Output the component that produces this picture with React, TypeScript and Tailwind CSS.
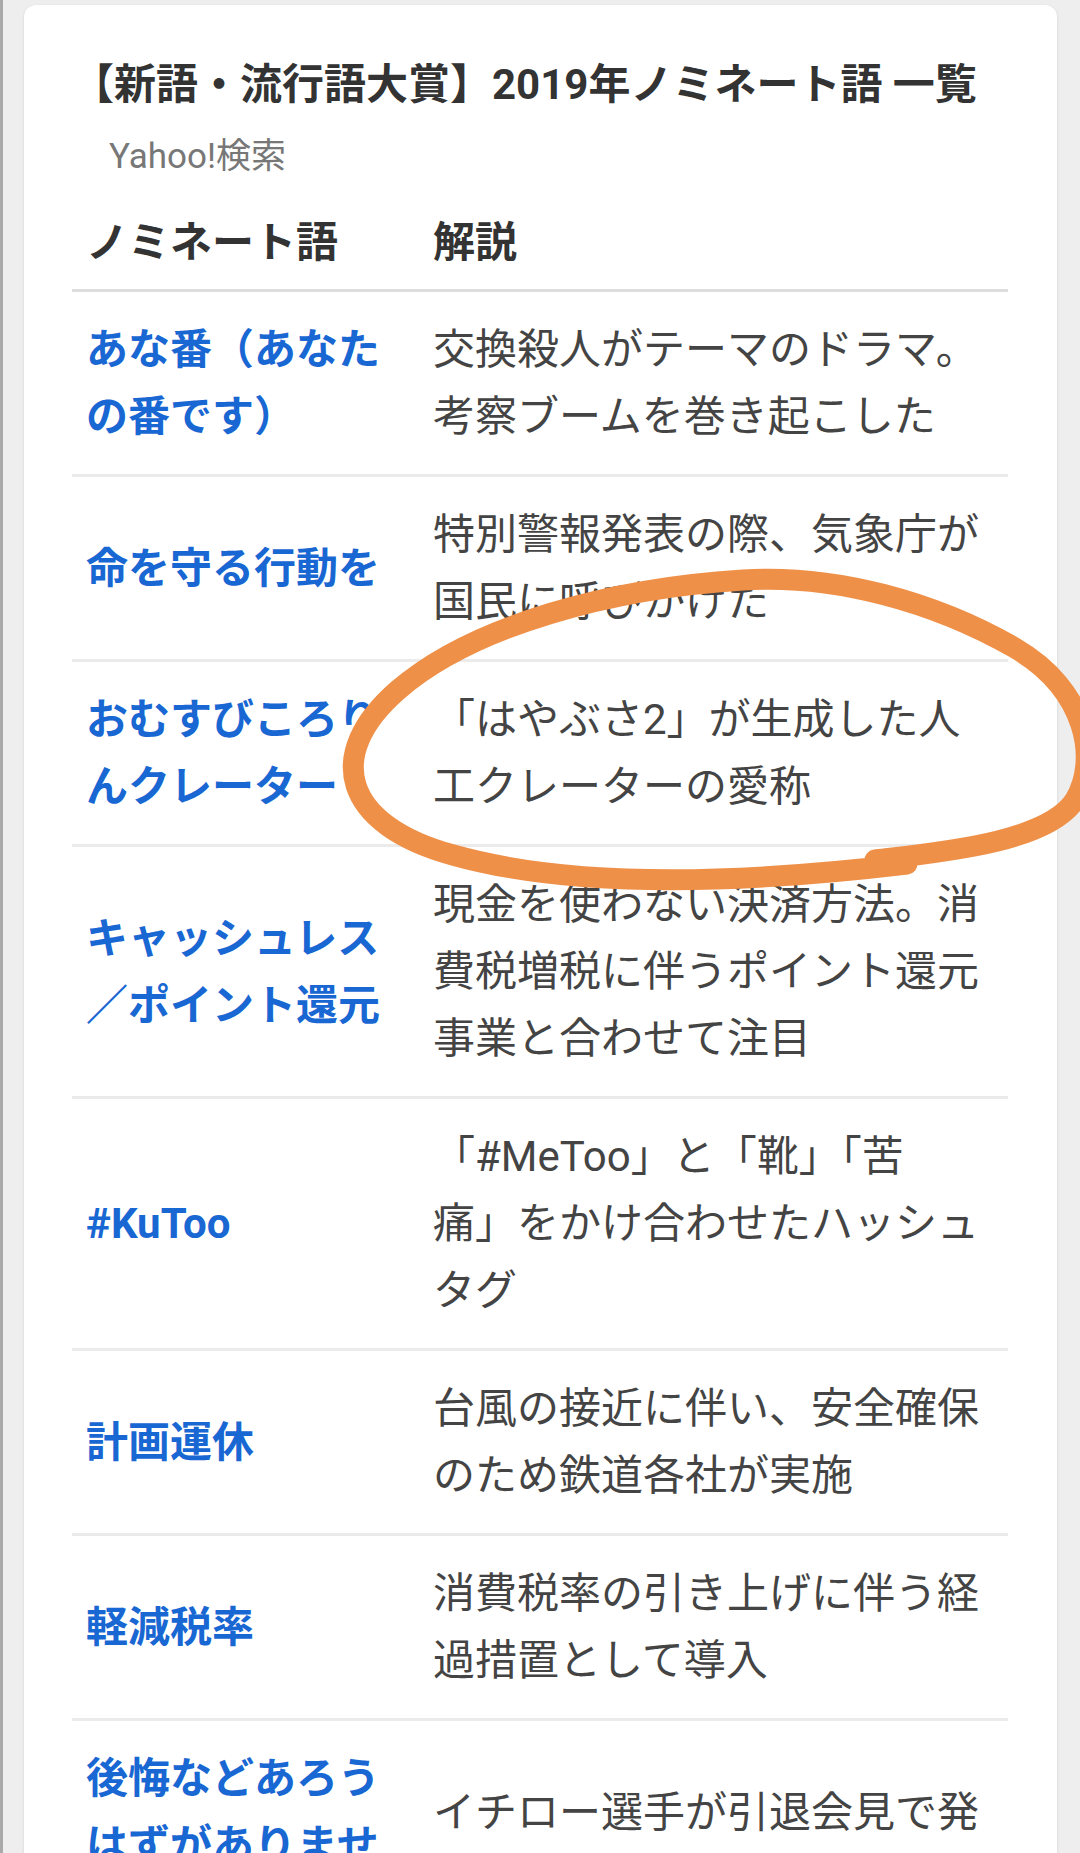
import React from "react";

type Row = {
  word: string[];
  note: string[];
};

const rows: Row[] = [
  {
    word: ["あな番（あなた", "の番です）"],
    note: ["交換殺人がテーマのドラマ。", "考察ブームを巻き起こした"],
  },
  {
    word: ["命を守る行動を"],
    note: ["特別警報発表の際、気象庁が", "国民に呼びかけた"],
  },
  {
    word: ["おむすびころり", "んクレーター"],
    note: ["「はやぶさ2」が生成した人", "工クレーターの愛称"],
  },
  {
    word: ["キャッシュレス", "／ポイント還元"],
    note: [
      "現金を使わない決済方法。消",
      "費税増税に伴うポイント還元",
      "事業と合わせて注目",
    ],
  },
  {
    word: ["#KuToo"],
    note: ["「#MeToo」と「靴」「苦", "痛」をかけ合わせたハッシュ", "タグ"],
  },
  {
    word: ["計画運休"],
    note: ["台風の接近に伴い、安全確保", "のため鉄道各社が実施"],
  },
  {
    word: ["軽減税率"],
    note: ["消費税率の引き上げに伴う経", "過措置として導入"],
  },
  {
    word: ["後悔などあろう", "はずがありませ", "ん"],
    note: ["イチロー選手が引退会見で発", "言"],
  },
];

const Lines = ({ lines }: { lines: string[] }) => (
  <>
    {lines.map((l, i) => (
      <div key={i} className="whitespace-nowrap">
        {l}
      </div>
    ))}
  </>
);

const NomineeRow = ({ row }: { row: Row }) => {
  return (
    <div className="grid grid-cols-[361px_1fr] items-center py-[24px] leading-[67px] border-b-[3px] border-[#ebebeb]">
      <div className="pl-[14px] font-bold text-[#1967d2]">
        <Lines lines={row.word} />
      </div>
      <div className="text-[#444444]">
        <Lines lines={row.note} />
      </div>
    </div>
  );
};

// hand-drawn orange circle over the third row
const Scribble = () => (
  <svg
    className="absolute inset-0 pointer-events-none"
    width="1080"
    height="1853"
    viewBox="0 0 1080 1853"
  >
    <path
      d="M872 860 C940 852 1045 842 1072 800 C1096 760 1084 690 1012 648 C932 602 832 574 740 580 C610 588 470 625 395 690 C320 755 340 825 450 855 C560 886 720 886 904 864"
      fill="none"
      stroke="#ef9048"
      strokeWidth="21"
      strokeLinecap="round"
      strokeLinejoin="round"
    />
  </svg>
);

const App = () => {
  return (
    <div className="relative w-[1080px] h-[1853px] overflow-hidden bg-[#eeeeee] border-l-[3px] border-[#a9a9a9] pt-[5px] pl-[21px] font-['Roboto','Noto_Sans_CJK_JP',sans-serif]">
      <div className="w-[1033px] min-h-[1900px] bg-white rounded-[12px] shadow-[0_1px_3px_rgba(0,0,0,0.12)] pl-[48px] pr-[49px] pt-[52px]">
        <h1 className="text-[42px] leading-[56px] font-bold text-[#333333] whitespace-nowrap">
          【新語・流行語大賞】2019年ノミネート語 一覧
        </h1>
        <div className="mt-[22px] ml-[37px] text-[35px] leading-[44px] text-[#777777]">
          Yahoo!検索
        </div>
        <div className="text-[42px]">
          <div className="grid grid-cols-[361px_1fr] mt-[30px] pb-[13px] leading-[67px] font-bold text-[#333333] border-b-[3px] border-[#dddddd]">
            <div className="pl-[14px]">ノミネート語</div>
            <div>解説</div>
          </div>
          {rows.map((row, i) => (
            <NomineeRow key={i} row={row} />
          ))}
        </div>
      </div>
      <Scribble />
    </div>
  );
};

export default App;
